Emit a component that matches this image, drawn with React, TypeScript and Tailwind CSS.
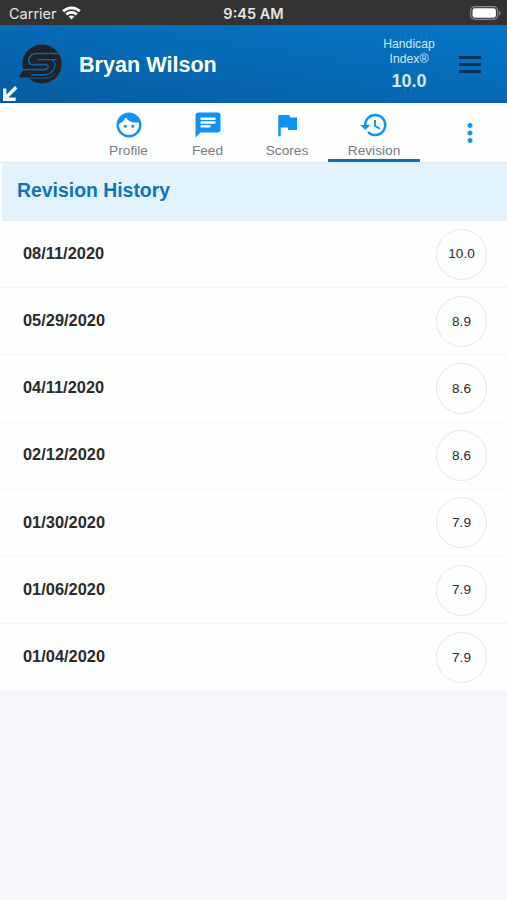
import React from "react";
import { MdChat, MdFace, MdFlag, MdHistory, MdMoreVert } from "react-icons/md";
import type { IconType } from "react-icons";

interface TabProps {
  label: string;
  icon: IconType;
  width: string;
  active?: boolean;
}

interface RowProps {
  date: string;
  index: string;
  last?: boolean;
}

const revisions = [
  { date: "08/11/2020", index: "10.0" },
  { date: "05/29/2020", index: "8.9" },
  { date: "04/11/2020", index: "8.6" },
  { date: "02/12/2020", index: "8.6" },
  { date: "01/30/2020", index: "7.9" },
  { date: "01/06/2020", index: "7.9" },
  { date: "01/04/2020", index: "7.9" },
];

const StatusBar = () => {
  return (
    <div className="grid h-[25px] grid-cols-3 items-center bg-[#333333] pt-[2px] leading-none text-[#e6e6e6]">
      <div className="flex items-center gap-[5px] pl-[9px]">
        <span className="pt-px font-['Inter',sans-serif] text-[14.5px]">Carrier</span>
        <svg className="mb-px" width="19" height="14" viewBox="0 0 19 14" fill="none" stroke="#fff" strokeWidth="2.7">
          <path d="M1.2 5.3C5.8 .6 13.2 .6 17.8 5.3" />
          <path d="M4.3 8.5C7.2 5.7 11.8 5.7 14.7 8.5" />
          <path d="M6.6 10.6 9.5 13.6l2.9-3c-1.7-1.5-4.1-1.5-5.8 0z" fill="#fff" stroke="none" />
        </svg>
      </div>
      <span className="pt-px text-center font-['Inter',sans-serif] text-[14.5px] font-semibold whitespace-nowrap">9:45 AM</span>
      <div className="flex justify-end pr-[6px] pb-px">
        <svg width="31" height="14" viewBox="0 0 31 14">
          <rect x=".7" y=".7" width="27" height="12.6" rx="4" fill="none" stroke="#8a8a8a" strokeWidth="1.2" />
          <rect x="2.5" y="2.2" width="23.4" height="9.6" rx="2.4" fill="#fff" />
          <path d="M29 4.7c2 .8 2 3.8 0 4.6z" fill="#8a8a8a" />
        </svg>
      </div>
    </div>
  );
};

const Logo = () => {
  return (
    <svg width="44" height="40" viewBox="0 0 44 40">
      <circle cx="23" cy="20" r="19.6" fill="#202225" />
      <path d="M4 26 0 33.5h24c4 0 6-1 8-3z" fill="#202225" />
      <g fill="none" stroke="#0a62a9" strokeWidth="1.7">
        <path d="M41 9.5H18C9 9.500 7 20.600 13.500 20.600H27c3.500.4 3 5-2 5H4" />
        <path d="M38 15.600H18.500M32 15.600c6.500 2.500 4 9.500 0 13-2 1.900-4 2.200-8 2.200H12" strokeWidth="1.4" />
        <path d="M2 34.1h24c5 0 8-2 10-5" strokeWidth="1" />
      </g>
    </svg>
  );
};

const Header = () => {
  return (
    <header className="relative flex h-[78px] items-center border-b border-[#0560a6] bg-linear-to-tr from-[#075c9f] via-[#066ab5] to-[#0576c8] pl-[19px] text-white">
      <Logo />
      <h1 className="ml-[16px] flex-1 pt-[2px] text-[21.6px] leading-none font-bold">Bryan Wilson</h1>
      <div className="w-[60px] pt-px text-center text-[#d3e6f5]">
        <p className="text-[12.2px] leading-[15px]">Handicap Index®</p>
        <p className="mt-[4px] text-[18px] leading-[20px] font-bold">10.0</p>
      </div>
      <div className="mr-[26px] ml-[20px] flex w-[22px] flex-col gap-[4px] pt-[2px]">
        <span className="h-[3px] bg-[#083358]" />
        <span className="h-[3px] bg-[#083358]" />
        <span className="h-[3px] bg-[#083358]" />
      </div>
      <svg className="absolute bottom-[1px] left-[3px]" width="15" height="15" viewBox="0 0 15 15" fill="none" stroke="#f1f6fa" strokeWidth="3.4">
        <path d="M13.2 1.2 2.5 12M1.7 2.5v10.7h11" />
      </svg>
    </header>
  );
};

const Tab = ({ label, icon: Icon, width, active }: TabProps) => {
  return (
    <div className={`relative flex flex-col items-center pt-[7px] ${width}`}>
      <Icon className="text-[#0d93fa]" size={30} />
      <span className="mt-[3px] text-[13.7px] leading-[16px] text-[#7b7b7b]">{label}</span>
      {active && <span className="absolute inset-x-0 bottom-0 h-[3px] bg-[#0d6fb8]" />}
    </div>
  );
};

const RevisionRow = ({ date, index, last }: RowProps) => {
  return (
    <li className={`flex h-[67.2px] items-center justify-between border-b pr-[20px] pl-[23px] ${last ? "border-transparent" : "border-[#f2f4f5]"}`}>
      <span className="pb-[2px] text-[16.4px] font-bold text-[#2b2b2b]">{date}</span>
      <span className="flex size-[51px] items-center justify-center rounded-full border border-[#e6e6e6] pt-px text-[13.6px] text-[#2b2b2b]">
        {index}
      </span>
    </li>
  );
};

const App = () => {
  return (
    <div className="min-h-screen w-full bg-[#f5f6f9] font-['Liberation_Sans',Arial,sans-serif]">
      <StatusBar />
      <Header />
      <nav className="flex h-[60px] border-b border-[#dfe6ec] bg-[#fdfefe] pl-[88px]">
        <Tab label="Profile" icon={MdFace} width="w-[81px]" />
        <Tab label="Feed" icon={MdChat} width="w-[77px]" />
        <Tab label="Scores" icon={MdFlag} width="w-[82px]" />
        <Tab label="Revision" icon={MdHistory} width="w-[92px]" active />
        <div className="flex flex-1 items-center justify-center pl-[13px]">
          <MdMoreVert className="text-[#0d93fa]" size={30} />
        </div>
      </nav>
      <div className="bg-[#fdfefe] pl-[2px]">
        <h2 className="flex h-[58px] items-center border-b border-[#e4eef5] bg-[#e3f3fe] pb-px pl-[15px] text-[19.4px] font-bold text-[#0f73bb]">
          Revision History
        </h2>
      </div>
      <ul className="bg-[#fdfefe]">
        {revisions.map((item, i) => (
          <RevisionRow key={item.date} date={item.date} index={item.index} last={i === revisions.length - 1} />
        ))}
      </ul>
    </div>
  );
};

export default App;
